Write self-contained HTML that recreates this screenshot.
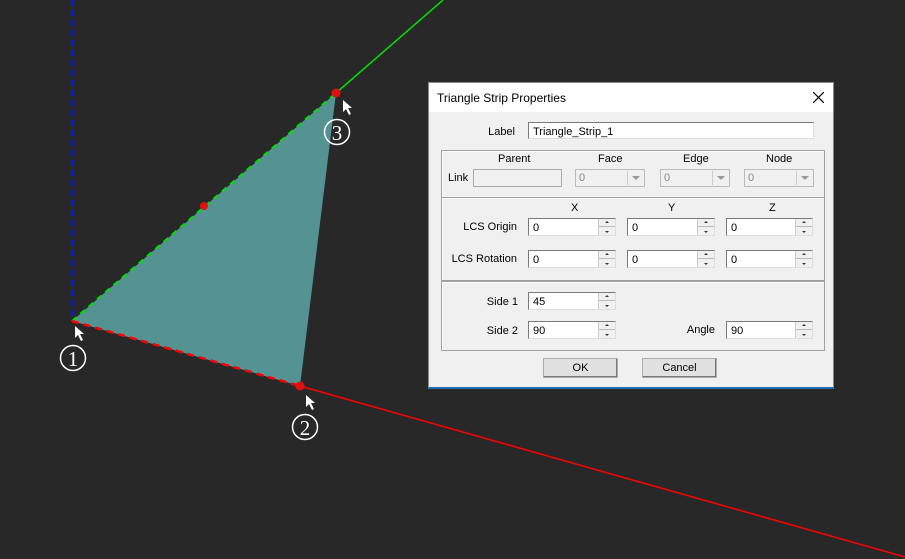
<!DOCTYPE html><html><head><style>
body{margin:0;width:905px;height:559px;background:#282828;overflow:hidden;position:relative;font-family:"Liberation Sans",sans-serif;font-size:11px;color:#000}
.a{position:absolute}
.dlg{left:428px;top:82px;width:404px;height:304px;background:#f0f0f0;border:1px solid #888;border-bottom:2px solid #1e6fb8}
.tb{left:0;top:0;width:404px;height:29px;background:#fff}
.grp{border:1px solid #a0a0a0;box-shadow:inset 1px 1px 0 #fff}
.in{background:#fff;border:1px solid #7a7a7a;border-right-color:#ddd;border-bottom-color:#ddd;height:16px;box-sizing:border-box;padding:3px 4px 0;line-height:13px}
.sp{position:absolute;right:0;top:0;width:16px;height:100%;border-left:1px solid #ccc;background:#f0f0f0}
.sp:before,.sp:after{content:"";position:absolute;left:6px;border:2px solid transparent}
.sp:before{top:2px;border-bottom:2px solid #333;border-top:0}
.sp:after{bottom:2px;border-top:2px solid #333;border-bottom:0}
.sp i{position:absolute;left:0;right:0;top:7px;height:1px;background:#bbb}
.cb{background:#f0f0f0;border:1px solid #bbb;height:18px;box-sizing:border-box;color:#888;padding:2px 3px}
.cb b{position:absolute;right:1px;top:1px;width:15px;height:14px;border-left:1px solid #ccc;}
.cb b:after{content:"";position:absolute;left:4px;top:5px;border:4px solid transparent;border-top:4px solid #999;border-bottom:0}
.btn{border:1px solid #adadad;background:#e1e1e1;box-shadow:inset -1px -1px 0 #777;text-align:center;line-height:19px;height:20px;box-sizing:border-box}
.r{text-align:right}
</style></head><body>
<svg class="a" style="left:0;top:0" width="905" height="559">
<polygon points="72,321 300,386 336,93" fill="#559393"/>
<line x1="72" y1="0" x2="72" y2="321" stroke="#0018ff" stroke-width="2" stroke-dasharray="6,4"/>
<line x1="336" y1="93" x2="443" y2="0" stroke="#00e000" stroke-width="1.5"/>
<line x1="72" y1="321" x2="336" y2="93" stroke="#00e000" stroke-width="2" stroke-dasharray="6,5"/>
<line x1="300" y1="386" x2="905" y2="557" stroke="#ff0000" stroke-width="1.5"/>
<line x1="72" y1="321" x2="300" y2="386" stroke="#ff0000" stroke-width="2.5" stroke-dasharray="7,5"/>
<circle cx="336" cy="93" r="4.5" fill="#e01010"/><circle cx="300" cy="386" r="4.5" fill="#e01010"/><circle cx="204" cy="206" r="4" fill="#e01010"/>
<g fill="#fff"><path d="M75,326 l0,12 l3,-3 l3,6 l2,-1 l-3,-6 l4,0z"/><path d="M306,395 l0,12 l3,-3 l3,6 l2,-1 l-3,-6 l4,0z"/><path d="M343,100 l0,12 l3,-3 l3,6 l2,-1 l-3,-6 l4,0z"/></g>
<g fill="none" stroke="#fff" stroke-width="1.5"><circle cx="73" cy="358" r="12.5"/><circle cx="305" cy="427" r="12.5"/><circle cx="337" cy="132" r="12.5"/></g>
<g fill="#fff" font-family="Liberation Serif" font-size="21" text-anchor="middle"><text x="73" y="366">1</text><text x="305" y="435">2</text><text x="337" y="140">3</text></g>
</svg>
<div class="a dlg">
<div class="a tb"><div class="a" style="left:8px;top:8px;font-size:12px">Triangle Strip Properties</div>
<svg class="a" style="left:384px;top:9px" width="11" height="11"><path d="M0,0L11,11M11,0L0,11" stroke="#000" stroke-width="1.2"/></svg></div>
<div class="a r" style="left:40px;top:43px;width:46px">Label</div>
<div class="a in" style="left:99px;top:39px;width:286px;height:17px">Triangle_Strip_1</div>
<div class="a grp" style="left:12px;top:67px;width:382px;height:46px"></div>
<div class="a grp" style="left:12px;top:114px;width:382px;height:82px"></div>
<div class="a grp" style="left:12px;top:198px;width:382px;height:68px"></div>
<div class="a" style="left:69px;top:70px">Parent</div><div class="a" style="left:169px;top:70px">Face</div><div class="a" style="left:254px;top:70px">Edge</div><div class="a" style="left:337px;top:70px">Node</div>
<div class="a" style="left:19px;top:89px">Link</div>
<div class="a" style="left:44px;top:86px;width:89px;height:18px;border:1px solid #aaa;box-sizing:border-box"></div>
<div class="a cb" style="left:146px;top:86px;width:70px">0<b></b></div>
<div class="a cb" style="left:231px;top:86px;width:70px">0<b></b></div>
<div class="a cb" style="left:315px;top:86px;width:70px">0<b></b></div>
<div class="a" style="left:142px;top:119px">X</div><div class="a" style="left:239px;top:119px">Y</div><div class="a" style="left:340px;top:119px">Z</div>
<div class="a r" style="left:10px;top:138px;width:78px">LCS Origin</div>
<div class="a r" style="left:10px;top:170px;width:78px">LCS Rotation</div>
<div class="a in" style="left:99px;top:135px;width:88px;height:18px">0<div class="sp"><i></i></div></div>
<div class="a in" style="left:198px;top:135px;width:88px;height:18px">0<div class="sp"><i></i></div></div>
<div class="a in" style="left:297px;top:135px;width:87px;height:18px">0<div class="sp"><i></i></div></div>
<div class="a in" style="left:99px;top:167px;width:88px;height:18px">0<div class="sp"><i></i></div></div>
<div class="a in" style="left:198px;top:167px;width:88px;height:18px">0<div class="sp"><i></i></div></div>
<div class="a in" style="left:297px;top:167px;width:87px;height:18px">0<div class="sp"><i></i></div></div>
<div class="a r" style="left:40px;top:213px;width:49px">Side 1</div>
<div class="a r" style="left:40px;top:242px;width:49px">Side 2</div>
<div class="a r" style="left:240px;top:241px;width:46px">Angle</div>
<div class="a in" style="left:99px;top:209px;width:88px;height:18px">45<div class="sp"><i></i></div></div>
<div class="a in" style="left:99px;top:238px;width:88px;height:18px">90<div class="sp"><i></i></div></div>
<div class="a in" style="left:297px;top:238px;width:87px;height:18px">90<div class="sp"><i></i></div></div>
<div class="a btn" style="left:114px;top:275px;width:75px">OK</div>
<div class="a btn" style="left:213px;top:275px;width:75px">Cancel</div>
</div>
</body></html>
